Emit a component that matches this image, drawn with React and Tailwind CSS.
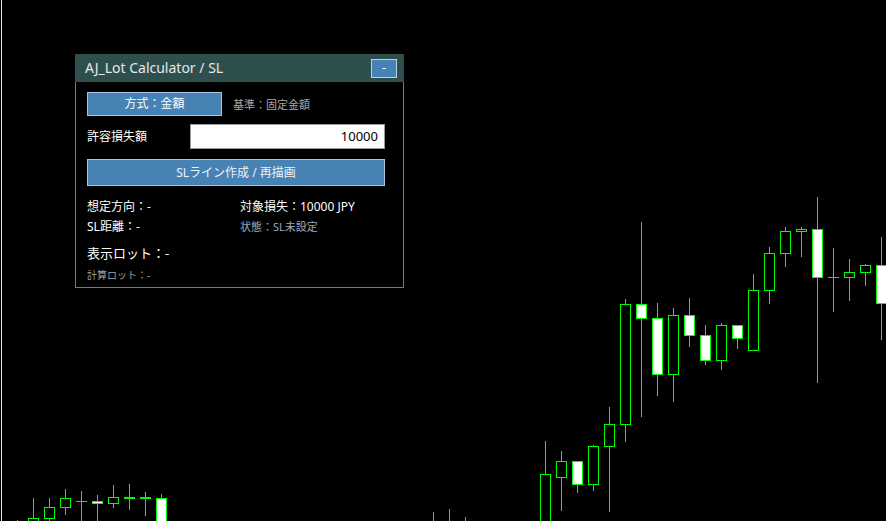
import React from "react";

// [center x, high, body top, body bottom, low, bull (white body)]
const CANDLES = [
  [17, 520, 530, 530, 530, false],
  [33, 498, 518, 530, 530, false],
  [49, 498, 507, 518, 530, false],
  [65, 489, 498, 507, 514, false],
  [81, 491, 501, 501, 520, false],
  [97, 495, 501, 503, 530, true],
  [113, 485, 497, 503, 507, false],
  [129, 484, 497, 498, 509, false],
  [145, 492, 497, 498, 515, false],
  [161, 494, 498, 530, 530, true],
  [433, 512, 530, 530, 530, false],
  [449, 509, 530, 530, 530, false],
  [465, 517, 530, 530, 530, false],
  [545, 441, 474, 530, 530, false],
  [561, 451, 461, 477, 510, false],
  [577, 461, 461, 484, 492, true],
  [593, 445, 446, 484, 490, false],
  [609, 407, 424, 446, 511, false],
  [625, 299, 304, 424, 441, false],
  [641, 222, 304, 318, 416, true],
  [657, 303, 318, 374, 395, true],
  [673, 308, 315, 374, 401, false],
  [689, 298, 315, 335, 346, true],
  [705, 325, 335, 360, 364, true],
  [721, 323, 325, 360, 369, false],
  [737, 325, 325, 338, 348, true],
  [753, 274, 290, 350, 350, false],
  [769, 247, 253, 290, 303, false],
  [785, 227, 231, 253, 266, false],
  [801, 227, 229, 231, 256, false],
  [817, 197, 229, 277, 382, true],
  [833, 248, 277, 277, 311, false],
  [849, 259, 272, 277, 300, false],
  [865, 264, 265, 272, 285, false],
  [881, 237, 265, 303, 339, true],
];

function Chart() {
  return (
    <svg width="886" height="521" className="block" shapeRendering="crispEdges">
      <rect width="886" height="521" fill="#000" />
      <line x1="1.5" y1="0" x2="1.5" y2="521" stroke="#e6e6e6" />
      {CANDLES.map(([x, hi, top, bot, lo, bull]) => (
        <g key={x}>
          <line x1={x + 0.5} y1={hi} x2={x + 0.5} y2={lo + 1} stroke="#00ff00" />
          {top === bot ? (
            <line x1={x - 5} y1={top + 0.5} x2={x + 6} y2={top + 0.5} stroke="#00ff00" />
          ) : (
            <rect x={x - 4.5} y={top + 0.5} width="10" height={bot - top}
              fill={bull ? "#ffffff" : "#000000"} stroke="#00ff00" />
          )}
        </g>
      ))}
    </svg>
  );
}

function LotPanel() {
  return (
    <div className="absolute left-[75px] top-[54px] w-[329px] h-[234px] bg-black border border-[#7a7a7a] border-t-0 flex flex-col font-['Noto_Sans','Noto_Sans_CJK_JP',sans-serif]">
      {/* title bar */}
      <div className="h-[28px] -mx-px bg-[#2f4f4f] flex items-center justify-between pl-[10px] pr-[7px]">
        <span className="text-[14px] text-[#e8e8e8] leading-none">AJ_Lot Calculator / SL</span>
        <button className="w-[26px] h-[19px] bg-[#4682b4] border border-[#b9cfe6] text-white text-[12px] leading-none flex items-center justify-center">
          -
        </button>
      </div>

      <div className="flex flex-col px-[11px] pt-[10px]">
        <div className="flex items-center h-[24px]">
          <button className="w-[135px] h-[24px] bg-[#4682b4] border border-[#a9c4e0] text-white text-[12px] leading-none">
            方式：金額
          </button>
          <span className="ml-[11px] text-[11px] text-[#a8a8a8] leading-none">基準：固定金額</span>
        </div>

        <div className="flex items-center h-[25px] mt-[8px]">
          <span className="w-[103px] text-[12px] text-white leading-none">許容損失額</span>
          <div className="w-[195px] h-[25px] bg-white border border-[#9a9a9a] flex items-center justify-end pr-[6px] text-[13px] text-black">
            10000
          </div>
        </div>

        <button className="mt-[10px] w-[298px] h-[27px] bg-[#4682b4] border border-[#a9c4e0] text-[#eef3f8] text-[12px] leading-none">
          SLライン作成 / 再描画
        </button>

        <div className="grid grid-cols-[153px_1fr] mt-[11px] text-white">
          <div className="h-[20px] flex items-center text-[12px]">想定方向：-</div>
          <div className="h-[20px] flex items-center text-[12px]">対象損失：10000 JPY</div>
          <div className="h-[20px] flex items-center text-[12px]">SL距離：-</div>
          <div className="h-[20px] flex items-center text-[11px] text-[#98aac0]">状態：SL未設定</div>
        </div>

        <div className="h-[22px] mt-[6px] flex items-center text-[13px] text-white">表示ロット：-</div>
        <div className="h-[16px] mt-[2px] flex items-center text-[10px] text-[#a0a0a0]">計算ロット：-</div>
      </div>
    </div>
  );
}

export default function App() {
  return (
    <div className="relative w-[886px] h-[521px] bg-black overflow-hidden">
      <Chart />
      <LotPanel />
    </div>
  );
}
